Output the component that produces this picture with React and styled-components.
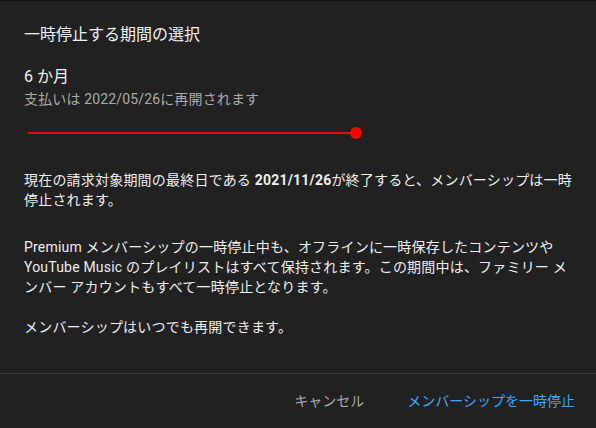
import styled, { createGlobalStyle } from "styled-components"

const GlobalStyle = createGlobalStyle`
  html, body {
    margin: 0;
    padding: 0;
    background: #212121;
  }
  body {
    font-family: Roboto, "Noto Sans CJK JP", sans-serif;
    -webkit-font-smoothing: antialiased;
  }
`

const Dialog = styled.div`
  display: flex;
  flex-direction: column;
  width: 596px;
  height: 428px;
  box-sizing: border-box;
  background: #212121;
  border-top: 1px solid #141414;
  color: #f1f1f1;
`
const Body = styled.div`
  flex: 1;
  padding: 22px 24px 0;
`
const Title = styled.h2`
  margin: 0;
  font-size: 16px;
  line-height: 24px;
  font-weight: 400;
  color: #f1f1f1;
`
const Period = styled.div`
  margin-top: 18px;
  font-size: 16px;
  line-height: 24px;
  color: #f1f1f1;
`
const Sub = styled.div`
  font-size: 14px;
  line-height: 20px;
  letter-spacing: 0.15px;
  color: #aaaaaa;
`
const SliderBox = styled.div`
  position: relative;
  width: 336px;
  height: 24px;
  margin-top: 12px;
  padding: 0 4px;
  box-sizing: border-box;
  display: flex;
  align-items: center;
`
const Track = styled.div`
  position: relative;
  flex: 1;
  height: 2px;
  background: #ff0000;
`
const Knob = styled.span`
  position: absolute;
  top: 50%;
  width: 12px;
  height: 12px;
  margin: -6px 0 0 -6px;
  border-radius: 50%;
  background: #ff0000;
`
const Text = styled.p`
  margin: ${(p) => p.$top}px 0 0;
  font-size: 14px;
  line-height: 20px;
  letter-spacing: 0.2px;
  color: #eeeeee;
  b {
    font-weight: 700;
  }
`
const Footer = styled.div`
  height: 54px;
  border-top: 1px solid #383838;
  display: flex;
  align-items: center;
  justify-content: flex-end;
  gap: 11px;
  padding: 0 5px;
`
const Button = styled.button`
  background: none;
  border: 0;
  padding: 10px 16px;
  font: inherit;
  font-size: 14px;
  line-height: 20px;
  color: ${(p) => (p.$primary ? "#3ea6ff" : "#aaaaaa")};
  cursor: pointer;
`

function Slider({ value, max }) {
  const pct = (value / max) * 100
  return (
    <SliderBox>
      <Track>
        <Knob style={{ left: pct + "%" }} />
      </Track>
    </SliderBox>
  )
}

export default function App() {
  return (
    <>
      <GlobalStyle />
      <Dialog>
        <Body>
          <Title>一時停止する期間の選択</Title>
          <Period>6 か月</Period>
          <Sub>支払いは 2022/05/26に再開されます</Sub>
          <Slider value={6} max={6} />
          <Text $top={25}>
            現在の請求対象期間の最終日である <b>2021/11/26</b>が終了すると、メンバーシップは一時停止されます。
          </Text>
          <Text $top={27}>
            Premium メンバーシップの一時停止中も、オフラインに一時保存したコンテンツや YouTube Music のプレイリストはすべて保持されます。この期間中は、ファミリー メンバー アカウントもすべて一時停止となります。
          </Text>
          <Text $top={20}>メンバーシップはいつでも再開できます。</Text>
        </Body>
        <Footer>
          <Button>キャンセル</Button>
          <Button $primary>メンバーシップを一時停止</Button>
        </Footer>
      </Dialog>
    </>
  )
}
